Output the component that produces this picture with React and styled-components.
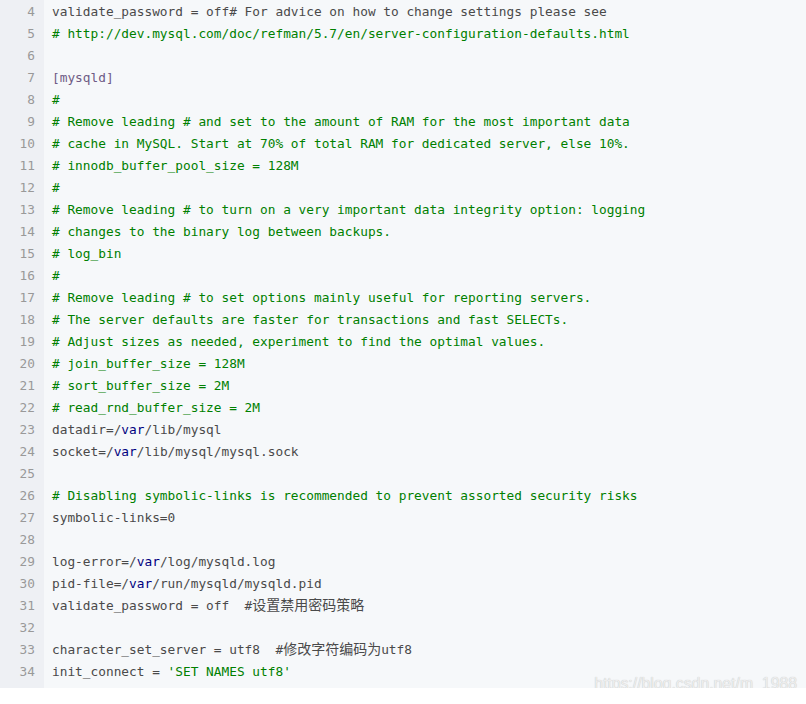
import styled, { createGlobalStyle } from "styled-components";

const GlobalStyle = createGlobalStyle`
  body {
    margin: 0;
    background: #ffffff;
  }
`;

const Page = styled.div`
  position: relative;
  width: 806px;
`;

const CodeBlock = styled.div`
  display: flex;
  background: #f6f8fa;
  font-family: "DejaVu Sans Mono", "Liberation Mono", "Noto Sans CJK SC", monospace;
  font-size: 12.8px;
  line-height: 22px;
  padding-top: 1px;
  padding-bottom: 5px;
`;

const Gutter = styled.ul`
  list-style: none;
  margin: -1px 0 -5px;
  padding: 1px 9px 5px 0;
  width: 35px;
  background: #eef0f4;
  color: #999999;
  text-align: right;

  li {
    height: 22px;
  }
`;

const Code = styled.pre`
  flex: 1;
  margin: 0;
  padding: 0 0 0 8px;
  font: inherit;
  color: #4a4a4a;
`;

const Line = styled.div`
  height: 22px;
  white-space: pre;
`;

const tokenColors = {
  text: "#4a4a4a",
  comment: "#008000",
  section: "#6e5b85",
  path: "#000080",
  string: "#008000",
};

const Token = styled.span`
  color: ${(p) => tokenColors[p.$kind] || tokenColors.text};
`;

const Cjk = styled.span`
  font-family: "Noto Sans CJK SC", sans-serif;
  font-size: 14px;
  line-height: 1;
`;

const Watermark = styled.div`
  position: absolute;
  right: 9px;
  bottom: -5px;
  font-family: "Liberation Sans", Arial, sans-serif;
  font-size: 15.8px;
  color: #eeeeee;
  text-shadow: 0 0 1px rgba(0, 0, 0, 0.25);
  pointer-events: none;
`;

const c = (t) => [["comment", t]];

const lines = [
  [["text", "validate_password = off# For advice on how to change settings please see"]],
  c("# http://dev.mysql.com/doc/refman/5.7/en/server-configuration-defaults.html"),
  [],
  [["section", "[mysqld]"]],
  c("#"),
  c("# Remove leading # and set to the amount of RAM for the most important data"),
  c("# cache in MySQL. Start at 70% of total RAM for dedicated server, else 10%."),
  c("# innodb_buffer_pool_size = 128M"),
  c("#"),
  c("# Remove leading # to turn on a very important data integrity option: logging"),
  c("# changes to the binary log between backups."),
  c("# log_bin"),
  c("#"),
  c("# Remove leading # to set options mainly useful for reporting servers."),
  c("# The server defaults are faster for transactions and fast SELECTs."),
  c("# Adjust sizes as needed, experiment to find the optimal values."),
  c("# join_buffer_size = 128M"),
  c("# sort_buffer_size = 2M"),
  c("# read_rnd_buffer_size = 2M"),
  [["text", "datadir=/"], ["path", "var"], ["text", "/lib/mysql"]],
  [["text", "socket=/"], ["path", "var"], ["text", "/lib/mysql/mysql.sock"]],
  [],
  c("# Disabling symbolic-links is recommended to prevent assorted security risks"),
  [["text", "symbolic-links=0"]],
  [],
  [["text", "log-error=/"], ["path", "var"], ["text", "/log/mysqld.log"]],
  [["text", "pid-file=/"], ["path", "var"], ["text", "/run/mysqld/mysqld.pid"]],
  [["text", "validate_password = off  #"], ["cjk", "设置禁用密码策略"]],
  [],
  [["text", "character_set_server = utf8  #"], ["cjk", "修改字符编码为"], ["text", "utf8"]],
  [["text", "init_connect = "], ["string", "'SET NAMES utf8'"]],
];

export default function App() {
  return (
    <Page>
      <GlobalStyle />
      <CodeBlock>
        <Gutter>
          {lines.map((_, i) => (
            <li key={i}>{i + 4}</li>
          ))}
        </Gutter>
        <Code>
          {lines.map((segs, i) => (
            <Line key={i}>
              {segs.map(([kind, text], j) =>
                kind === "cjk" ? (
                  <Cjk key={j}>{text}</Cjk>
                ) : (
                  <Token key={j} $kind={kind}>
                    {text}
                  </Token>
                )
              )}
            </Line>
          ))}
        </Code>
      </CodeBlock>
      <Watermark>https://blog.csdn.net/m_1988</Watermark>
    </Page>
  );
}
